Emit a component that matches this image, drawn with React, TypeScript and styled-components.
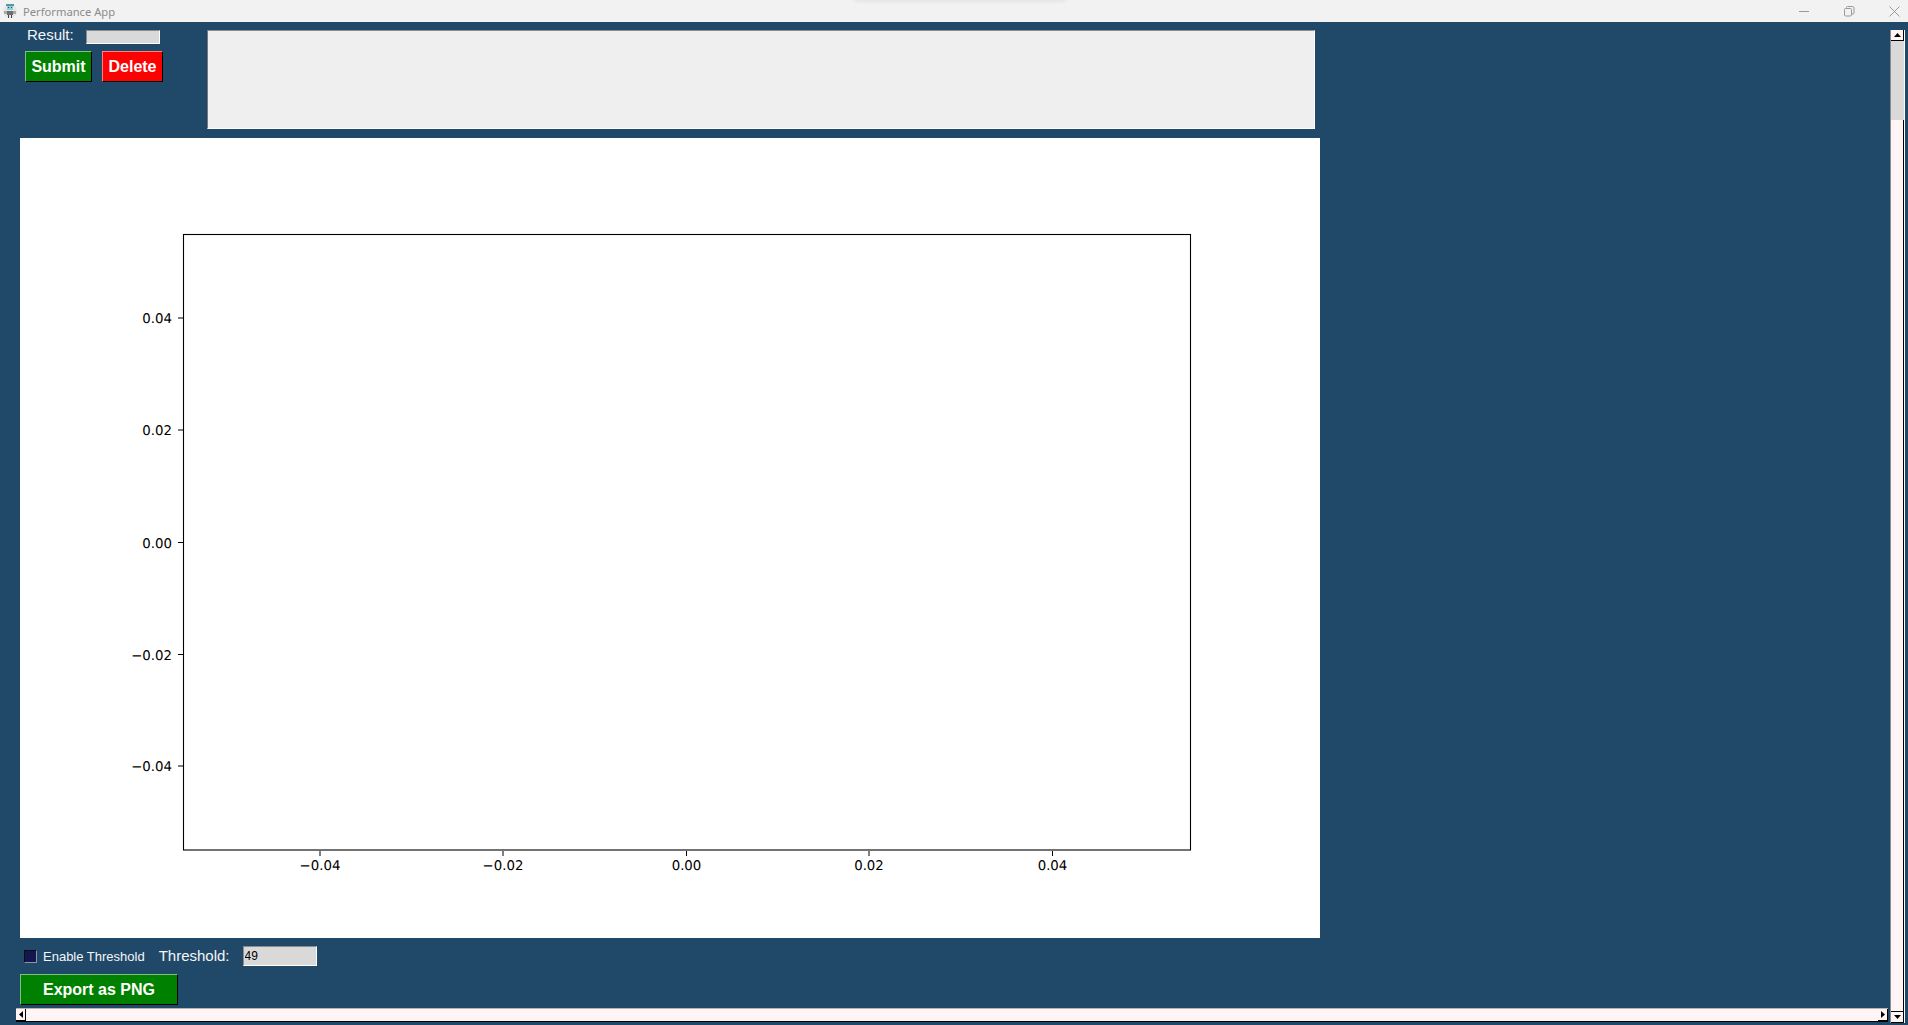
import React from 'react';
import styled, { createGlobalStyle } from 'styled-components';

const pageBlue = '#204868';
const snow = '#fff5f5';

const GlobalStyle = createGlobalStyle`
  html, body {
    margin: 0;
    padding: 0;
    height: 100%;
    overflow: hidden;
    background: ${pageBlue};
    font-family: "Liberation Sans", Arial, sans-serif;
  }
  #root {
    height: 100%;
  }
`;

const Window = styled.div`
  position: relative;
  display: flex;
  flex-direction: column;
  width: 1908px;
  height: 1025px;
  overflow: hidden;
  background: ${pageBlue};
`;

const TitleBar = styled.header`
  display: flex;
  align-items: center;
  flex: 0 0 22px;
  height: 22px;
  padding-left: 3px;
  background: #f2f2f2;
  position: relative;
  z-index: 1;
`;

const TitleText = styled.span`
  margin-left: 6px;
  font-family: "Noto Sans", sans-serif;
  font-size: 11.2px;
  color: #8b8b8b;
`;

const TitleShadow = styled.div`
  position: absolute;
  top: -4px;
  left: 855px;
  width: 210px;
  height: 4px;
  box-shadow: 0 0 5px 1px rgba(0, 0, 0, 0.08);
`;

const WindowControls = styled.div`
  display: flex;
  align-items: center;
  gap: 34px;
  margin-left: auto;
  padding-right: 8px;
`;

const Workspace = styled.div`
  display: flex;
  flex: 1;
  min-height: 0;
`;

const Content = styled.main`
  display: flex;
  flex-direction: column;
  width: 1890px;
  overflow: hidden;
`;

const TopRow = styled.section`
  display: flex;
  height: 116px;
  padding-left: 20px;
`;

const FormColumn = styled.div`
  display: flex;
  flex-direction: column;
  width: 187px;
`;

const ResultRow = styled.div`
  display: flex;
  align-items: flex-start;
  height: 18px;
  margin-top: 4px;
  padding-left: 7px;
`;

const FieldLabel = styled.label`
  font-size: 15px;
  line-height: 18px;
  color: #f4f6f8;
`;

const SunkenInput = styled.input<{ $height: number }>`
  box-sizing: border-box;
  width: 74px;
  height: ${(p) => p.$height}px;
  padding: 0 1px;
  border-width: 1px;
  border-style: solid;
  border-color: #8c8c8c #ffffff #ffffff #8c8c8c;
  border-radius: 0;
  background: #d9d9d9;
  font-family: "Liberation Sans", Arial, sans-serif;
  font-size: 12px;
  color: #000000;
  outline: none;
`;

const ResultInput = styled(SunkenInput)`
  margin: 4px 0 0 12px;
`;

const ButtonRow = styled.div`
  display: flex;
  gap: 10px;
  margin-top: 7px;
  padding-left: 5px;
`;

const RaisedButton = styled.button<{ $tone: string; $edge: string; $width: number }>`
  box-sizing: border-box;
  width: ${(p) => p.$width}px;
  height: 31px;
  padding: 0;
  border-width: 1px;
  border-style: solid;
  border-color: ${(p) => p.$edge} #000000 #000000 ${(p) => p.$edge};
  background: ${(p) => p.$tone};
  font-family: "Liberation Sans", Arial, sans-serif;
  font-size: 16px;
  font-weight: 700;
  color: #ffffff;
`;

const NotesBox = styled.div`
  box-sizing: border-box;
  width: 1108px;
  height: 99px;
  margin-top: 8px;
  border-width: 1px;
  border-style: solid;
  border-color: #8f8f8f #ffffff #ffffff #777777;
  background: #efefef;
`;

const ChartPanel = styled.section`
  flex: none;
  width: 1300px;
  height: 800px;
  margin-left: 20px;
  background: #ffffff;
`;

const ChartSvg = styled.svg`
  display: block;
`;

const ThresholdRow = styled.div`
  display: flex;
  align-items: center;
  height: 20px;
  margin-top: 8px;
  padding-left: 24px;
`;

const CheckBox = styled.span`
  box-sizing: border-box;
  flex: none;
  width: 13px;
  height: 13px;
  border-width: 1px;
  border-style: solid;
  border-color: #0c0c14 #8c97a3 #8c97a3 #0c0c14;
  background: #16164f;
`;

const CheckLabel = styled.span`
  margin-left: 6px;
  font-size: 13px;
  color: #f4f6f8;
`;

const ThresholdLabel = styled(FieldLabel)`
  margin-left: 14px;
`;

const ThresholdInput = styled(SunkenInput)`
  margin-left: 13px;
`;

const ExportRow = styled.div`
  margin-top: 8px;
  padding-left: 20px;
`;

const HScrollBar = styled.div`
  display: flex;
  box-sizing: border-box;
  height: 14px;
  margin: 3px 2px 0 16px;
  border-top: 1px solid #b9b2b2;
  border-bottom: 1px solid #000000;
  background: ${snow};
`;

const VScrollBar = styled.aside`
  display: flex;
  flex-direction: column;
  box-sizing: border-box;
  width: 15px;
  height: 993px;
  margin-top: 8px;
  border-left: 1px solid #8c8c8c;
  border-right: 1px solid #ffffff;
  background: #d9d9d9;
`;

const ScrollThumb = styled.div`
  box-sizing: border-box;
  flex: 1;
  margin-top: 79px;
  background: ${snow};
  border-right: 1px solid #000000;
  border-bottom: 1px solid #000000;
`;

const ScrollArrow = styled.button<{ $vertical?: boolean }>`
  display: flex;
  align-items: center;
  justify-content: center;
  box-sizing: border-box;
  flex: none;
  width: ${(p) => (p.$vertical ? '13px' : '10px')};
  height: ${(p) => (p.$vertical ? '11px' : '12px')};
  padding: 0;
  border: 0;
  border-right: 1px solid #000000;
  border-bottom: 1px solid #000000;
  background: ${snow};
`;

const HTrack = styled.div`
  flex: 1;
`;

const yTicks = [
  { label: '0.04', y: 318 },
  { label: '0.02', y: 430 },
  { label: '0.00', y: 542.5 },
  { label: '−0.02', y: 654.5 },
  { label: '−0.04', y: 766 },
];

const xTicks = [
  { label: '−0.04', x: 320 },
  { label: '−0.02', x: 503 },
  { label: '0.00', x: 686.5 },
  { label: '0.02', x: 869 },
  { label: '0.04', x: 1052.5 },
];

// chart coordinates are page pixels minus the panel origin
const originX = 20;
const originY = 138;

function EmptyPlot() {
  return (
    <ChartSvg width="1300" height="800" viewBox="0 0 1300 800">
      <g
        fontFamily="'DejaVu Sans', sans-serif"
        fontSize="13.33"
        fill="#000000"
        textRendering="geometricPrecision"
      >
        <rect
          x={183.5 - originX}
          y={234.5 - originY}
          width={1007}
          height={615.5}
          fill="#ffffff"
          stroke="#000000"
          strokeWidth="1.1"
        />
        {yTicks.map((t) => (
          <g key={t.label}>
            <line
              x1={178 - originX}
              x2={183 - originX}
              y1={t.y - originY}
              y2={t.y - originY}
              stroke="#000000"
            />
            <text x={172 - originX} y={t.y - originY + 5} textAnchor="end">
              {t.label}
            </text>
          </g>
        ))}
        {xTicks.map((t) => (
          <g key={t.label}>
            <line
              x1={t.x - originX}
              x2={t.x - originX}
              y1={851 - originY}
              y2={856 - originY}
              stroke="#000000"
            />
            <text x={t.x - originX} y={870 - originY} textAnchor="middle">
              {t.label}
            </text>
          </g>
        ))}
      </g>
    </ChartSvg>
  );
}

function AppIcon() {
  return (
    <svg width="14" height="16" viewBox="0 0 14 16">
      <circle cx="7" cy="8" r="7" fill="#e6e6e6" />
      <rect x="3" y="1" width="8" height="2" fill="#4f9aa5" />
      <rect x="4" y="3" width="6" height="4" fill="#8fd0d8" />
      <rect x="5" y="4" width="1" height="1" fill="#30484f" />
      <rect x="8" y="4" width="1" height="1" fill="#30484f" />
      <rect x="4" y="8" width="6" height="4" fill="#6f6f6f" />
      <rect x="1" y="8" width="3" height="3" fill="#a8a8a8" />
      <rect x="10" y="8" width="3" height="3" fill="#a8a8a8" />
      <rect x="5" y="12" width="1" height="3" fill="#444444" />
      <rect x="8" y="12" width="1" height="3" fill="#444444" />
    </svg>
  );
}

function Controls() {
  return (
    <WindowControls>
      <svg width="11" height="11" viewBox="0 0 11 11">
        <line x1="0" x2="10" y1="5.5" y2="5.5" stroke="#9a9a9a" />
      </svg>
      <svg width="11" height="11" viewBox="0 0 11 11" fill="none" stroke="#9a9a9a">
        <rect x="0.5" y="2.5" width="7" height="7.5" rx="1" />
        <path d="M2.5 2.5V1.5a1 1 0 0 1 1-1h5a1.5 1.5 0 0 1 1.5 1.5v5a1 1 0 0 1-1 1H7.5" />
      </svg>
      <svg width="11" height="11" viewBox="0 0 11 11" stroke="#9a9a9a">
        <line x1="0.5" y1="0.5" x2="10.5" y2="10.5" />
        <line x1="10.5" y1="0.5" x2="0.5" y2="10.5" />
      </svg>
    </WindowControls>
  );
}

type Direction = 'up' | 'down' | 'left' | 'right';

const arrowPoints: Record<Direction, string> = {
  up: '4.5,1 8,5 1,5',
  down: '1,1 8,1 4.5,5',
  left: '5,1 5,8 1,4.5',
  right: '1,1 1,8 5,4.5',
};

function Arrow({ direction }: { direction: Direction }) {
  const vertical = direction === 'up' || direction === 'down';
  return (
    <ScrollArrow $vertical={vertical}>
      <svg width={vertical ? 9 : 6} height={vertical ? 6 : 9}>
        <polygon points={arrowPoints[direction]} fill="#000000" />
      </svg>
    </ScrollArrow>
  );
}

export default function App() {
  return (
    <Window>
      <GlobalStyle />
      <TitleBar>
        <AppIcon />
        <TitleText>Performance App</TitleText>
        <TitleShadow />
        <Controls />
      </TitleBar>
      <Workspace>
        <Content>
          <TopRow>
            <FormColumn>
              <ResultRow>
                <FieldLabel>Result:</FieldLabel>
                <ResultInput $height={14} readOnly />
              </ResultRow>
              <ButtonRow>
                <RaisedButton $tone="#008000" $edge="#7fbf7f" $width={67}>
                  Submit
                </RaisedButton>
                <RaisedButton $tone="#ff0000" $edge="#ff8080" $width={61}>
                  Delete
                </RaisedButton>
              </ButtonRow>
            </FormColumn>
            <NotesBox />
          </TopRow>
          <ChartPanel>
            <EmptyPlot />
          </ChartPanel>
          <ThresholdRow>
            <CheckBox />
            <CheckLabel>Enable Threshold</CheckLabel>
            <ThresholdLabel>Threshold:</ThresholdLabel>
            <ThresholdInput $height={20} defaultValue="49" />
          </ThresholdRow>
          <ExportRow>
            <RaisedButton $tone="#008000" $edge="#7fbf7f" $width={158}>
              Export as PNG
            </RaisedButton>
          </ExportRow>
          <HScrollBar>
            <Arrow direction="left" />
            <HTrack />
            <Arrow direction="right" />
          </HScrollBar>
        </Content>
        <VScrollBar>
          <Arrow direction="up" />
          <ScrollThumb />
          <Arrow direction="down" />
        </VScrollBar>
      </Workspace>
    </Window>
  );
}
